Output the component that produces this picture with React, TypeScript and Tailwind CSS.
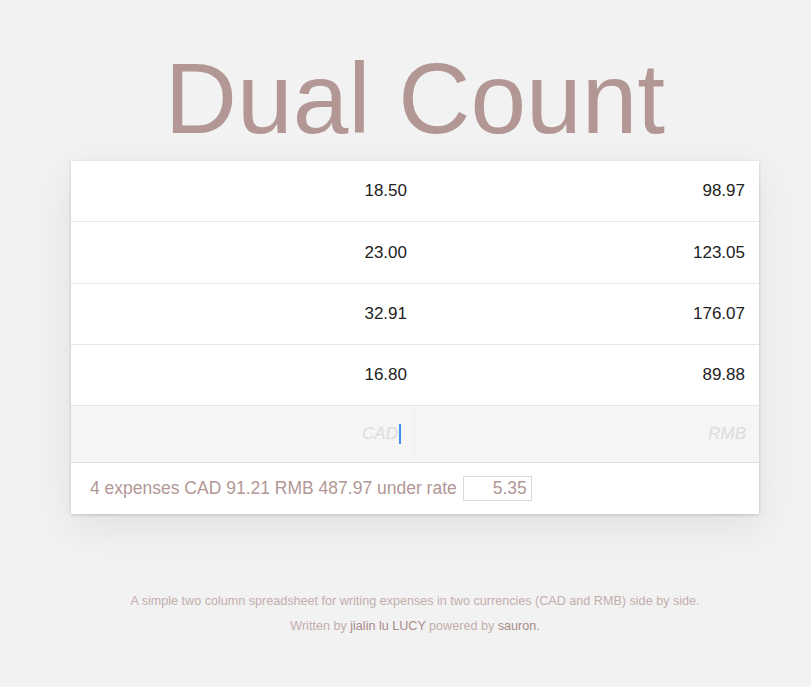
const rows = [
  { cad: '18.50', rmb: '98.97' },
  { cad: '23.00', rmb: '123.05' },
  { cad: '32.91', rmb: '176.07' },
  { cad: '16.80', rmb: '89.88' },
];

const App = () => {
  return (
    <div className="min-h-[687px] bg-[#f2f2f2] font-['Liberation_Sans',Arial,sans-serif]">
      <div className="flex flex-col items-center pl-[19px] pt-[48px]">
        <h1 className="text-[100px] leading-[100px] text-[#b29795]">Dual Count</h1>

        {/* Sheet */}
        <div className="mt-[13px] w-[688px] bg-white shadow-[0_1px_3px_rgba(0,0,0,0.18),0_12px_40px_rgba(0,0,0,0.08)]">
          {rows.map((r, i) => (
            <div key={i} className="grid grid-cols-2 h-[61.25px] border-b border-[#e6e6e6] text-[17px] text-[#222]">
              <div className="flex items-center justify-end pr-[8px]">{r.cad}</div>
              <div className="flex items-center justify-end pr-[14px]">{r.rmb}</div>
            </div>
          ))}

          {/* Input row */}
          <div className="grid grid-cols-2 h-[57px] bg-[#f5f5f5] border-b border-[#e0e0e0] text-[17px] italic text-[#dcdcdc]">
            <div className="flex items-center justify-end pr-[13px] border-r border-[#efefef]">
              <span>CAD</span>
              <span className="ml-[1px] h-[20px] w-[2px] bg-[#3b8ff0]" />
            </div>
            <div className="flex items-center justify-end pr-[13px]">RMB</div>
          </div>

          {/* Summary */}
          <div className="flex items-center h-[51px] pl-[19px] text-[17.5px] text-[#b29795]">
            <span>4 expenses CAD 91.21 RMB 487.97 under rate</span>
            <div className="ml-[6px] flex items-center justify-end w-[69px] h-[25px] border border-[#dadada] pr-[4px]">
              5.35
            </div>
          </div>
        </div>

        <div className="mt-[79px] text-center text-[12.6px] leading-[16px] text-[#c3aeac]">
          <p>A simple two column spreadsheet for writing expenses in two currencies (CAD and RMB) side by side.</p>
          <p className="mt-[9px]">
            Written by <a className="text-[#a88b89]">jialin lu LUCY</a> powered by <a className="text-[#a88b89]">sauron.</a>
          </p>
        </div>
      </div>
    </div>
  );
};

export default App;
